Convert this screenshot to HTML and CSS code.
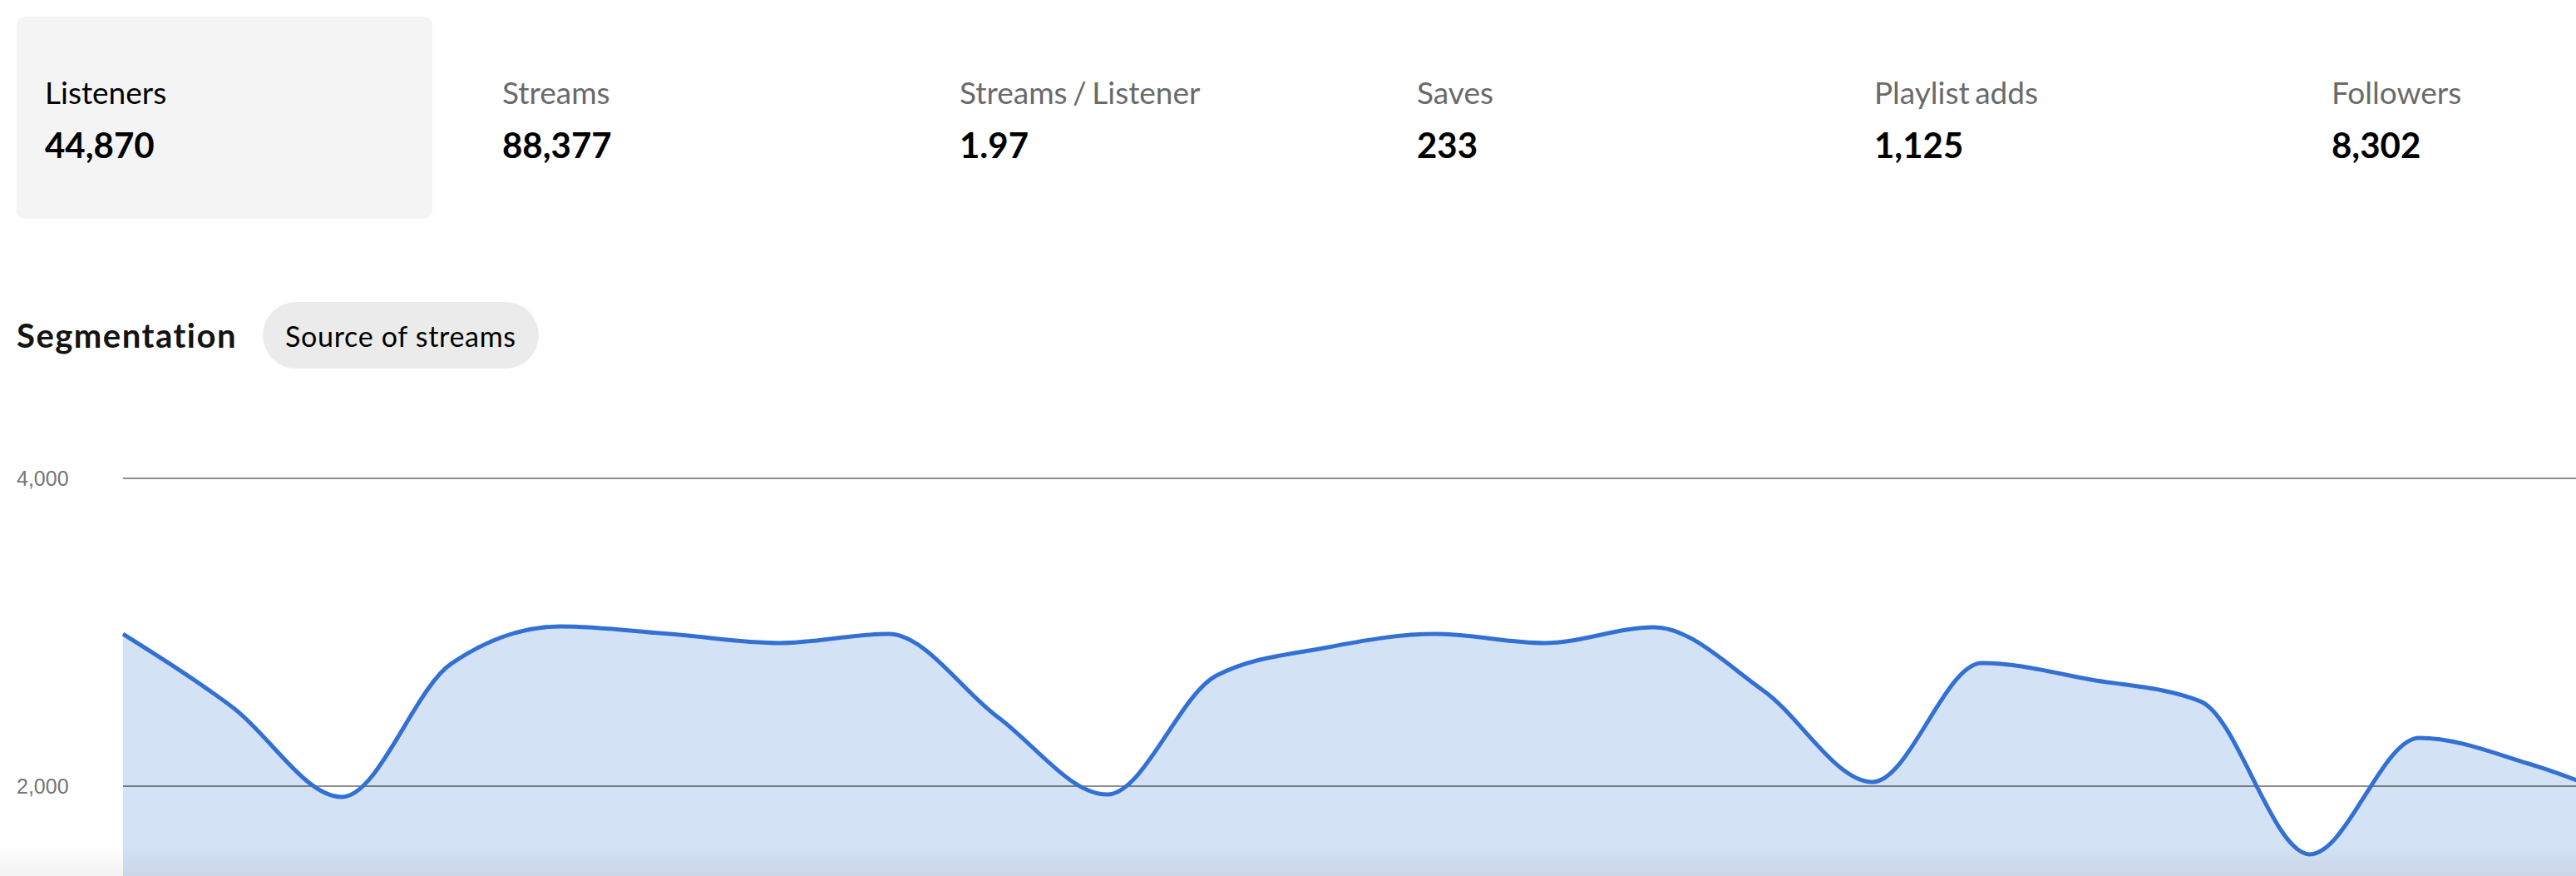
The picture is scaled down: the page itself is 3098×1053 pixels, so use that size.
FILE: index.html
```html
<!DOCTYPE html>
<html lang="en">
<head>
  <meta charset="UTF-8">
  <meta name="viewport" content="width=device-width, initial-scale=1.0">
  <title>Audience</title>
  <link rel="stylesheet" href="styles.css">
</head>
<body>
<div class="stats">
  <div class="stat stat-active">
    <div class="stat-label">Listeners</div>
    <div class="stat-value">44,870</div>
  </div>
  <div class="stat">
    <div class="stat-label">Streams</div>
    <div class="stat-value">88,377</div>
  </div>
  <div class="stat">
    <div class="stat-label">Streams / Listener</div>
    <div class="stat-value">1.97</div>
  </div>
  <div class="stat">
    <div class="stat-label">Saves</div>
    <div class="stat-value">233</div>
  </div>
  <div class="stat">
    <div class="stat-label">Playlist adds</div>
    <div class="stat-value">1,125</div>
  </div>
  <div class="stat">
    <div class="stat-label">Followers</div>
    <div class="stat-value">8,302</div>
  </div>
</div>

<div class="segments">
  <h2 class="segments-title">Segmentation</h2>
  <button class="chip">Source of streams</button>
</div>

<div class="chart">
  <svg class="chart-svg" width="3078" height="518" viewBox="0 0 3078 518">
    <path id="chartArea" class="chart-area" d=""></path>
    <line class="grid-line" x1="128" x2="3078" y1="40" y2="40"></line>
    <line class="grid-line" x1="128" x2="3078" y1="410" y2="410"></line>
    <text class="axis-label" x="0" y="49">4,000</text>
    <text class="axis-label" x="0" y="419">2,000</text>
    <path id="chartLine" class="chart-line" d=""></path>
  </svg>
</div>

<div class="bottom-fade"></div>

<script src="script.js"></script>
</body>
</html>
```

FILE: styles.css
```css
body {
  margin: 0;
  padding: 20px 0 0 20px;
  font-family: Lato, "Liberation Sans", sans-serif;
  color: #000;
  background: #fff;
  overflow: hidden;
}

.stats {
  display: flex;
  gap: 50px;
}

.stat {
  flex: 0 0 500px;
  box-sizing: border-box;
  height: 243px;
  padding: 68px 34px 0;
  border-radius: 10px;
}

.stat-active {
  background: #f4f4f4;
}

.stat-label {
  font-size: 37px;
  line-height: 46px;
  word-spacing: -3px;
  color: #6a6a6a;
  white-space: nowrap;
}

.stat-active .stat-label {
  color: #000;
}

.stat-value {
  margin-top: 16px;
  font-size: 42px;
  line-height: 48px;
  font-weight: 700;
}

.segments {
  display: flex;
  align-items: center;
  gap: 31px;
  margin-top: 100px;
}

.segments-title {
  margin: 0;
  font-size: 40px;
  font-weight: 700;
  letter-spacing: 1.5px;
  color: #141414;
}

.chip {
  height: 80px;
  padding: 0 27px;
  border: none;
  border-radius: 40px;
  background: #ebebeb;
  font-family: inherit;
  font-size: 34px;
  letter-spacing: 0.7px;
  color: #000;
}

.chart {
  margin-top: 92px;
}

.chart-svg {
  display: block;
  overflow: hidden;
}

.chart-area {
  fill: #d4e2f5;
}

.grid-line {
  stroke: rgba(0, 0, 0, 0.45);
  stroke-width: 2;
}

.axis-label {
  font-family: "Liberation Sans", Arial, sans-serif;
  font-size: 25px;
  fill: #757575;
}

.chart-line {
  fill: none;
  stroke: #3370d4;
  stroke-width: 5;
  stroke-linejoin: round;
}

.bottom-fade {
  position: fixed;
  left: 0;
  right: 0;
  bottom: 0;
  height: 36px;
  background: linear-gradient(rgba(0, 0, 0, 0), rgba(0, 0, 0, 0.05));
  pointer-events: none;
}
```

FILE: script.js
```javascript
// daily listeners, one point per day
const listeners = [
  2989, 2514, 1930, 2795, 3038, 2989, 2930, 2989, 2449, 1946, 2719, 2900,
  2989, 2930, 3032, 2622, 2027, 2800, 2692, 2551, 1557, 2314, 2146, 1880
];

const plotLeft = 128;
const step = 131.5;
const plotTop = 40;       // y of the 4,000 line
const maxValue = 4000;
const pxPerUnit = 370 / 2000;
const zeroY = plotTop + maxValue * pxPerUnit;

const points = listeners.map((v, i) => [plotLeft + i * step, plotTop + (maxValue - v) * pxPerUnit]);

// monotone cubic interpolation (same idea as d3.curveMonotoneX)
function tangents(pts) {
  const t = [];
  for (let i = 1; i < pts.length - 1; i++) {
    const s0 = (pts[i][1] - pts[i - 1][1]) / (pts[i][0] - pts[i - 1][0]);
    const s1 = (pts[i + 1][1] - pts[i][1]) / (pts[i + 1][0] - pts[i][0]);
    const p = (s0 + s1) / 2;
    t[i] = (Math.sign(s0) + Math.sign(s1)) * Math.min(Math.abs(s0), Math.abs(s1), 0.5 * Math.abs(p)) || 0;
  }
  const n = pts.length - 1;
  const first = (pts[1][1] - pts[0][1]) / (pts[1][0] - pts[0][0]);
  const last = (pts[n][1] - pts[n - 1][1]) / (pts[n][0] - pts[n - 1][0]);
  t[0] = (3 * first - t[1]) / 2;
  t[n] = (3 * last - t[n - 1]) / 2;
  return t;
}

function linePath(pts) {
  const t = tangents(pts);
  let d = `M${pts[0][0]},${pts[0][1]}`;
  for (let i = 0; i < pts.length - 1; i++) {
    const [x0, y0] = pts[i];
    const [x1, y1] = pts[i + 1];
    const dx = (x1 - x0) / 3;
    d += ` C${x0 + dx},${y0 + dx * t[i]} ${x1 - dx},${y1 - dx * t[i + 1]} ${x1},${y1}`;
  }
  return d;
}

const line = linePath(points);
const lastX = points[points.length - 1][0];

document.getElementById("chartLine").setAttribute("d", line);
document.getElementById("chartArea").setAttribute("d", `${line} L${lastX},${zeroY} L${plotLeft},${zeroY} Z`);
```
